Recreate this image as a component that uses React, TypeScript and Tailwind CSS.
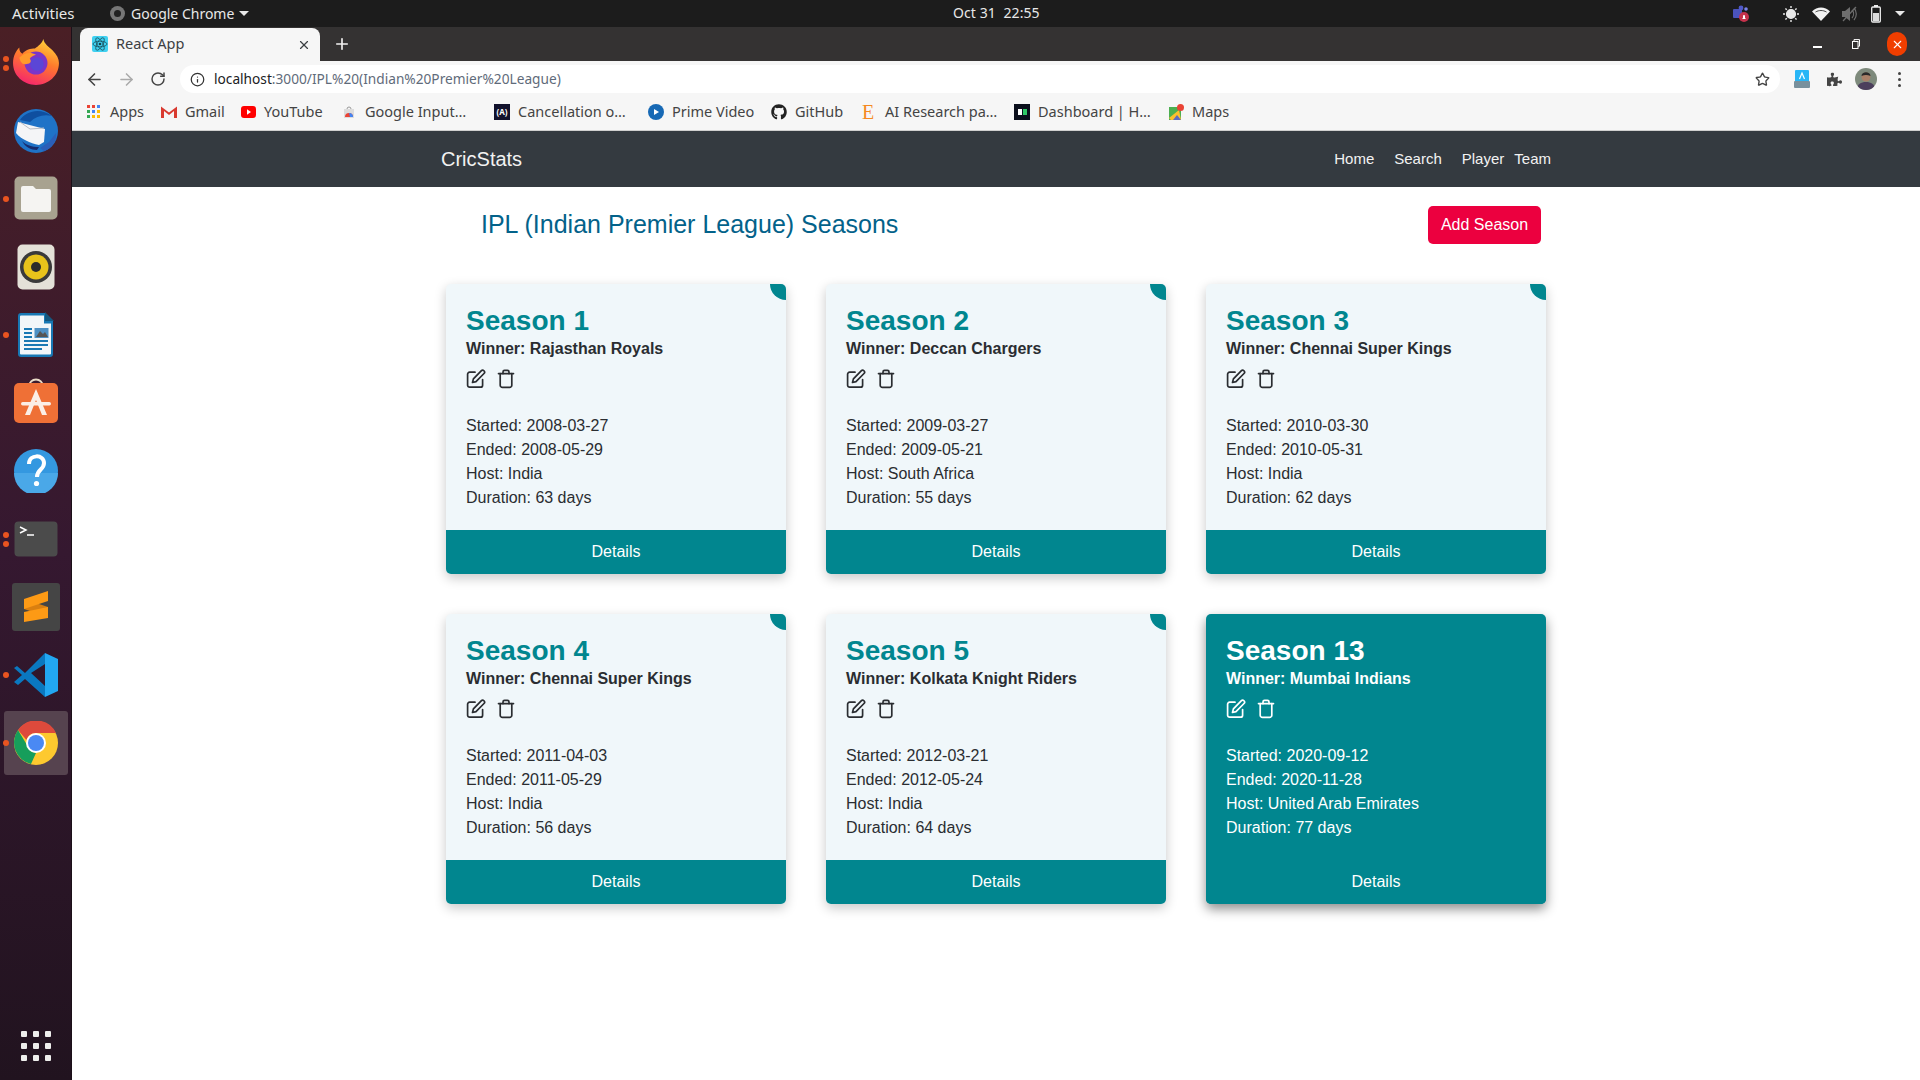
import { ArrowLeft, ArrowRight, Info, Plus, RotateCw, Star, X } from 'lucide-react';
import { FaGithub, FaPuzzlePiece } from 'react-icons/fa';

const seasons = [
  { name: 'Season 1', winner: 'Rajasthan Royals', start: '2008-03-27', end: '2008-05-29', host: 'India', days: 63 },
  { name: 'Season 2', winner: 'Deccan Chargers', start: '2009-03-27', end: '2009-05-21', host: 'South Africa', days: 55 },
  { name: 'Season 3', winner: 'Chennai Super Kings', start: '2010-03-30', end: '2010-05-31', host: 'India', days: 62 },
  { name: 'Season 4', winner: 'Chennai Super Kings', start: '2011-04-03', end: '2011-05-29', host: 'India', days: 56 },
  { name: 'Season 5', winner: 'Kolkata Knight Riders', start: '2012-03-21', end: '2012-05-24', host: 'India', days: 64 },
  { name: 'Season 13', winner: 'Mumbai Indians', start: '2020-09-12', end: '2020-11-28', host: 'United Arab Emirates', days: 77, active: true },
];

const EditIcon = () => (
  <svg width="20" height="20" viewBox="0 0 20 20" fill="none" stroke="currentColor" strokeWidth="1.7" strokeLinecap="round" strokeLinejoin="round">
    <path d="M9 3.2H3.6A2 2 0 0 0 1.6 5.2v11a2 2 0 0 0 2 2h11a2 2 0 0 0 2-2v-5.6" />
    <path d="M15.2 1.8a1.9 1.9 0 0 1 2.8 2.7L10 12.6l-3.5.9.9-3.6z" />
  </svg>
);

const TrashIcon = () => (
  <svg width="18" height="20" viewBox="0 0 18 20" fill="none" stroke="currentColor" strokeWidth="1.7" strokeLinecap="round" strokeLinejoin="round">
    <path d="M1.5 4.6h15" />
    <path d="M6 4.6V2.9a1.5 1.5 0 0 1 1.5-1.5h3A1.5 1.5 0 0 1 12 2.9v1.7" />
    <path d="M3.2 4.6v11.6a2.2 2.2 0 0 0 2.2 2.2h7.2a2.2 2.2 0 0 0 2.2-2.2V4.6" />
  </svg>
);

const SeasonCard = ({ season }: { season: (typeof seasons)[number] }) => {
  const active = !!season.active;
  return (
    <div className={`relative overflow-hidden rounded-[5px] h-[290px] flex flex-col ${active ? 'bg-[#01868f] text-white shadow-[0_5px_12px_rgba(0,0,0,0.45)]' : 'bg-[#f0f7fa] text-[#2a2d31] shadow-[0_4px_12px_rgba(0,0,0,0.22)]'}`}>
      {!active && <div className="absolute -top-4 -right-4 w-8 h-8 rounded-full bg-[#01868f]" />}
      <div className="flex-1 px-5 pt-[20px]">
        <h3 className={`text-[28px] leading-[33px] font-bold ${active ? 'text-white' : 'text-[#01868f]'}`}>{season.name}</h3>
        <div className="text-base leading-6 font-bold">Winner: {season.winner}</div>
        <div className="flex items-center gap-[11px] mt-[8px] h-5">
          <EditIcon />
          <TrashIcon />
        </div>
        <div className="mt-[25px] text-base leading-6">
          <div>Started: {season.start}</div>
          <div>Ended: {season.end}</div>
          <div>Host: {season.host}</div>
          <div>Duration: {season.days} days</div>
        </div>
      </div>
      <div className="h-11 flex items-center justify-center bg-[#01868f] text-white text-base">Details</div>
    </div>
  );
};

const Firefox = () => (
  <svg width="48" height="48" viewBox="0 0 46 46" className="mb-[2px]">
    <defs>
      <linearGradient id="ff1" x1="0.7" y1="0" x2="0.3" y2="1">
        <stop offset="0" stopColor="#ffd43a" />
        <stop offset="0.45" stopColor="#ff7a2c" />
        <stop offset="1" stopColor="#f5246e" />
      </linearGradient>
    </defs>
    <path d="M30 1c1 5 5 7 9 11 4 4 6 8 6 12 0 12-10 21-22 21S1 36 1 24C1 17 4 12 7 9c0 3 1 5 3 6 3-4 8-5 12-5 3-2 7-5 8-9z" fill="url(#ff1)" />
    <circle cx="23" cy="24" r="11" fill="#7a35c9" />
    <circle cx="24" cy="25" r="6.5" fill="#5b46d6" />
    <path d="M7 19c4-5 11-6 16-3-3 1-5 2-6 4 2 2 1 5-3 5-4 1-6-2-7-6z" fill="#ff9a2c" />
  </svg>
);

const Thunderbird = () => (
  <svg width="48" height="48" viewBox="0 0 48 48" className="mb-[2px]">
    <circle cx="24" cy="25" r="22" fill="#1f73c7" />
    <path d="M8 14c6-9 20-13 32-4-8-2-16 0-22 6z" fill="#0f4fa0" />
    <path d="M6 16l27 7-1 13-5 3C18 37 9 33 4 27z" fill="#f4f5f7" />
    <path d="M8 16l10 7 14-1" fill="none" stroke="#b9bdc4" strokeWidth="1" />
    <path d="M28 42l9-6 7-9c1 8-4 16-12 18z" fill="#2b5fb8" />
    <path d="M10 35c4 4 10 6 17 6l-2 3c-6 0-12-3-15-9z" fill="#172c6e" />
  </svg>
);

const Files = () => (
  <svg width="44" height="44" viewBox="0 0 44 44" className="mb-[2px]">
    <rect x="0.5" y="0.5" width="43" height="43" rx="5" fill="#a8a290" />
    <path d="M7 12a2 2 0 0 1 2-2h10l3 3h13a2 2 0 0 1 2 2v19a2 2 0 0 1-2 2H9a2 2 0 0 1-2-2z" fill="#f5f4f2" />
  </svg>
);

const Rhythmbox = () => (
  <svg width="38" height="46" viewBox="0 0 38 46">
    <rect x="0.5" y="0.5" width="37" height="45" rx="5" fill="#e4e1d8" />
    <circle cx="19" cy="23" r="16" fill="#3a3a3a" />
    <circle cx="19" cy="23" r="12.5" fill="#e8c31b" />
    <circle cx="19" cy="23" r="5" fill="#2b2b2b" />
  </svg>
);

const Writer = () => (
  <svg width="36" height="46" viewBox="0 0 36 46">
    <path d="M3 1h24l8 8v33a3 3 0 0 1-3 3H3a3 3 0 0 1-3-3V4a3 3 0 0 1 3-3z" fill="#1878b4" />
    <path d="M3 3.5h23v8h7v30a1 1 0 0 1-1 1H3a1 1 0 0 1-1-1V4.5a1 1 0 0 1 1-1z" fill="#f2f6f9" />
    <path d="M27 0l9 9h-9z" fill="#15577f" />
    <rect x="6" y="16" width="8" height="2" fill="#1878b4" />
    <rect x="6" y="20" width="8" height="2" fill="#1878b4" />
    <rect x="6" y="24" width="8" height="2" fill="#1878b4" />
    <rect x="6" y="28" width="24" height="2" fill="#1878b4" />
    <rect x="6" y="32" width="24" height="2" fill="#1878b4" />
    <rect x="6" y="36" width="18" height="2" fill="#1878b4" />
    <rect x="16.5" y="16" width="14" height="10" fill="#4d90c4" />
    <path d="M18 25l4-6 3 3 2-2 3 5z" fill="#555" />
  </svg>
);

const Software = () => (
  <svg width="44" height="46" viewBox="0 0 44 46" className="mb-[6px]">
    <path d="M15 10c0-10 14-10 14 0" fill="none" stroke="#e9dcc8" strokeWidth="2" />
    <rect x="0" y="6" width="44" height="40" rx="5" fill="#ef7036" />
    <path d="M22 12l11 26h-5l-6-15-6 15h-5z" fill="#fbeee6" />
    <rect x="7" y="25" width="30" height="3.5" rx="1.7" fill="#fbeee6" />
  </svg>
);

const Help = () => (
  <svg width="44" height="44" viewBox="0 0 44 44">
    <circle cx="22" cy="22" r="22" fill="#3498e0" />
    <path d="M0 24h44a22 22 0 0 1-44 0z" fill="#4aa8e8" />
    <path d="M15 15c0-10 15-10 15-1 0 7-7 6-7 14" fill="none" stroke="#fff" strokeWidth="4" />
    <circle cx="22.5" cy="34.5" r="2.6" fill="#fff" />
  </svg>
);

const Terminal = () => (
  <svg width="44" height="36" viewBox="0 0 44 36">
    <rect x="0.5" y="0.5" width="43" height="35" rx="4" fill="#4b4b4b" />
    <path d="M6 6l6 3-6 3" fill="none" stroke="#fff" strokeWidth="1.5" />
    <path d="M13 14h7" stroke="#fff" strokeWidth="1.5" />
  </svg>
);

const Sublime = () => (
  <svg width="48" height="48" viewBox="0 0 48 48">
    <rect width="48" height="48" rx="3" fill="#454545" />
    <path d="M12 16l24 8v10L12 26z" fill="#d97f10" />
    <path d="M36 8v10l-24 8V16z" fill="#fd9a15" />
    <path d="M36 24v11l-24 4V29z" fill="#fd9a15" />
  </svg>
);

const VsCode = () => (
  <svg width="44" height="44" viewBox="0 0 44 44">
    <path d="M31 0l13 6v32l-13 6z" fill="#22a7f2" />
    <path d="M31 0L11 20 3 13 0 15v0l8 7-8 7 4 3 7-6 20 18 0-11-14-13L31 11z" fill="#0a78c0" />
  </svg>
);

const Chrome = () => (
  <svg width="44" height="44" viewBox="0 0 44 44">
    <circle cx="22" cy="22" r="22" fill="#fdc92f" />
    <path d="M4 9A22 22 0 0 1 42 12H22a10 10 0 0 0-9.5 7z" fill="#dd4a3c" />
    <path d="M4 9l9 15a10 10 0 0 0 9 8l-5 11A22 22 0 0 1 4 9z" fill="#169e5b" />
    <circle cx="22" cy="22" r="10" fill="#fff" />
    <circle cx="22" cy="22" r="8" fill="#4a89f3" />
  </svg>
);

const dock = [
  { icon: <Firefox />, dots: 2 },
  { icon: <Thunderbird />, dots: 0 },
  { icon: <Files />, dots: 1 },
  { icon: <Rhythmbox />, dots: 0 },
  { icon: <Writer />, dots: 1 },
  { icon: <Software />, dots: 0 },
  { icon: <Help />, dots: 0 },
  { icon: <Terminal />, dots: 2 },
  { icon: <Sublime />, dots: 0 },
  { icon: <VsCode />, dots: 1 },
  { icon: <Chrome />, dots: 1, active: true },
];

const Dock = () => (
  <aside className="w-[72px] shrink-0 flex flex-col items-center bg-gradient-to-b from-[#4a1f25] via-[#351830] to-[#21131f] pt-[2px] pb-[19px] border-r border-[#1b1018]">
    {dock.map((item, i) => (
      <div key={i} className="relative w-[64px] h-[68px] flex items-center justify-center">
        {item.active && <div className="absolute left-0 top-[2px] w-[64px] h-[64px] rounded-[3px] bg-[#56434f]" />}
        <div className="relative">{item.icon}</div>
        {item.dots > 0 && (
          <div className="absolute left-0 top-0 bottom-0 -translate-x-[1px] flex flex-col justify-center gap-[3px]">
            {item.dots === 2 && <span className="w-[6px] h-[6px] rounded-full bg-[#e95420]" />}
            <span className="w-[6px] h-[6px] rounded-full bg-[#e95420]" />
          </div>
        )}
      </div>
    ))}
    <div className="mt-auto grid grid-cols-3 gap-[6px]">
      {[0, 1, 2, 3, 4, 5, 6, 7, 8].map((n) => (
        <span key={n} className="w-[6px] h-[6px] rounded-[1px] bg-[#eeeeec]" />
      ))}
    </div>
  </aside>
);

const TopBar = () => (
  <div className="h-[27px] shrink-0 bg-[#1c1c1c] text-[#e8e8e8] text-[14px] font-['Noto_Sans',sans-serif] flex items-center relative">
    <span className="ml-[12px] w-[98px] text-[15px]">Activities</span>
    <span className="w-[15px] h-[15px] rounded-full bg-[#777] mr-[6px] flex items-center justify-center">
      <span className="w-[7px] h-[7px] rounded-full bg-[#222]" />
    </span>
    <span>Google Chrome</span>
    <span className="ml-[5px] w-0 h-0 border-x-[5px] border-x-transparent border-t-[5px] border-t-[#e8e8e8]" />
    <span className="absolute left-[953px] top-[4px] leading-[18px] tracking-[0.1px]">Oct 31&nbsp; 22:55</span>
    <div className="ml-auto flex items-center mr-[15px]">
      <svg width="16" height="18" viewBox="0 0 16 18" className="mr-[33px]">
        <rect x="0" y="4" width="9" height="9" rx="1" fill="#4b53bc" />
        <circle cx="8" cy="3" r="2.4" fill="#5059c9" />
        <circle cx="13" cy="4" r="1.8" fill="#7b83eb" />
        <circle cx="11" cy="12" r="5" fill="#c4314b" />
        <path d="M9 14h4l-1-1v-2a1 1 0 0 0-2 0v2z" fill="#fff" />
      </svg>
      <svg width="18" height="18" viewBox="0 0 18 18" className="mr-[12px]" stroke="#e8e8e8" fill="none" strokeWidth="1.4">
        <circle cx="9" cy="9" r="4.4" fill="#e8e8e8" />
        <path d="M9 1v2M9 15v2M1 9h2M15 9h2M3.4 3.4l1.4 1.4M13.2 13.2l1.4 1.4M14.6 3.4l-1.4 1.4M4.8 13.2l-1.4 1.4" />
      </svg>
      <svg width="18" height="14" viewBox="0 0 18 14" className="mr-[12px]">
        <path d="M0 4.5C5-1 13-1 18 4.5L9 14z" fill="#f2f2f2" />
        <path d="M3.5 5C7 3 11 3 14.5 5" stroke="#1c1c1c" strokeWidth="0.8" fill="none" />
      </svg>
      <svg width="16" height="16" viewBox="0 0 16 16" className="mr-[13px]">
        <path d="M0 5h3l5-4v14l-5-4H0z" fill="#6e6e6e" />
        <path d="M10 4a6 6 0 0 1 0 8M12 2a9 9 0 0 1 0 12" stroke="#6e6e6e" fill="none" strokeWidth="1.2" />
        <path d="M1 15L14 1" stroke="#6e6e6e" strokeWidth="1.2" />
      </svg>
      <svg width="10" height="18" viewBox="0 0 10 18" className="mr-[14px]">
        <rect x="0.7" y="2" width="8.6" height="15" rx="1" fill="none" stroke="#eee" strokeWidth="1.3" />
        <rect x="3" y="0" width="4" height="2" fill="#eee" />
        <rect x="2" y="8" width="6" height="8" fill="#ddd" />
      </svg>
      <span className="w-0 h-0 border-x-[5px] border-x-transparent border-t-[5px] border-t-[#e8e8e8]" />
    </div>
  </div>
);

const TabStrip = () => (
  <div className="h-[34px] shrink-0 bg-[#343232] flex items-end pl-[8px] font-['Noto_Sans',sans-serif]">
    <div className="w-[240px] h-[33px] bg-[#f6f6f6] rounded-t-[8px] flex items-center pl-[12px] pr-[9px] text-[14.5px] text-[#3c4043]">
      <svg width="16" height="16" viewBox="0 0 16 16" className="mr-[8px] mb-[2px]">
        <rect width="16" height="16" rx="2" fill="#3fd0f0" />
        <g fill="none" stroke="#17424d" strokeWidth="0.7">
          <ellipse cx="8" cy="8" rx="7" ry="2.8" />
          <ellipse cx="8" cy="8" rx="7" ry="2.8" transform="rotate(60 8 8)" />
          <ellipse cx="8" cy="8" rx="7" ry="2.8" transform="rotate(120 8 8)" />
        </g>
        <circle cx="8" cy="8" r="1.3" fill="#17424d" />
      </svg>
      <span className="mb-[2px]">React App</span>
      <X className="ml-auto" size={14} strokeWidth={2} color="#3c4043" />
    </div>
    <Plus className="ml-[13px] mb-[8px]" size={18} strokeWidth={2.2} color="#f1f1f1" />
    <div className="ml-auto h-full flex items-center">
      <span className="w-[9px] h-[1.5px] bg-white mr-[30px] mt-[6px]" />
      <svg width="8" height="10" viewBox="0 0 8 10" className="mr-[27px]" fill="none" stroke="#fff" strokeWidth="1">
        <rect x="0.5" y="2.5" width="5.5" height="7" />
        <path d="M2 2.5V0.6h5.5v6.6H6" />
      </svg>
      <span className="w-5 h-6 rounded-full bg-[#f03e00] flex items-center justify-center mr-[13px]">
        <X size={13} strokeWidth={2} color="#fff" />
      </span>
    </div>
  </div>
);

const Toolbar = () => (
  <div className="h-[34px] shrink-0 bg-[#f6f6f6] flex items-center font-['Noto_Sans',sans-serif] pt-[2px]">
    <div className="w-[108px] flex items-center pl-[13px] gap-[13px]">
      <ArrowLeft size={19} strokeWidth={2} color="#444" />
      <ArrowRight size={19} strokeWidth={2} color="#aaa" />
      <RotateCw size={16} strokeWidth={2.2} color="#444" className="ml-[1px]" />
    </div>
    <div className="w-[1600px] h-[28px] bg-white rounded-full flex items-center pl-[10px] pr-[10px]">
      <Info size={15} strokeWidth={2} color="#333" className="mr-[9px]" />
      <span className="text-[13.7px] text-[#202124]">localhost<span className="text-[#5f6b7a]">:3000/IPL%20(Indian%20Premier%20League)</span></span>
      <Star className="ml-auto" size={15} strokeWidth={2.2} color="#444" />
    </div>
    <svg width="16" height="18" viewBox="0 0 16 18" className="ml-[14px]">
      <rect x="1" y="0" width="14" height="12" rx="1" fill="#29b6f6" />
      <rect x="0" y="11" width="16" height="7" rx="1" fill="#78909c" />
      <path d="M5.5 9L8 3l2.5 6" fill="none" stroke="#fff" strokeWidth="1.2" />
    </svg>
    <FaPuzzlePiece size={15} color="#444" className="ml-[17px]" />
    <svg width="22" height="22" viewBox="0 0 22 22" className="ml-[13px]">
      <defs>
        <clipPath id="avatar"><circle cx="11" cy="11" r="11" /></clipPath>
      </defs>
      <g clipPath="url(#avatar)">
        <rect width="22" height="22" fill="#7e8a7c" />
        <path d="M2 22c0-6 4-8 9-8s9 2 9 8z" fill="#4c3f5c" />
        <circle cx="11" cy="9" r="4.5" fill="#a98068" />
        <path d="M6.5 8c0-5 9-5 9 0-3-1.500-6-1.500-9 0z" fill="#2a2a2a" />
      </g>
    </svg>
    <div className="ml-[21px] flex flex-col gap-[3px]">
      <span className="w-[3px] h-[3px] rounded-full bg-[#444]" />
      <span className="w-[3px] h-[3px] rounded-full bg-[#444]" />
      <span className="w-[3px] h-[3px] rounded-full bg-[#444]" />
    </div>
  </div>
);

const bookmarks = [
  {
    label: 'Apps', width: 'w-[75px]',
    icon: (
      <svg width="14" height="14" viewBox="0 0 14 14">
        <rect x="0" y="0" width="3" height="3" fill="#ea4335" /><rect x="5" y="0" width="3" height="3" fill="#ea4335" /><rect x="10" y="0" width="3" height="3" fill="#4285f4" />
        <rect x="0" y="5" width="3" height="3" fill="#34a853" /><rect x="5" y="5" width="3" height="3" fill="#4285f4" /><rect x="10" y="5" width="3" height="3" fill="#fbbc05" />
        <rect x="0" y="10" width="3" height="3" fill="#34a853" /><rect x="5" y="10" width="3" height="3" fill="#fbbc05" /><rect x="10" y="10" width="3" height="3" fill="#fbbc05" />
      </svg>
    ),
  },
  {
    label: 'Gmail', width: 'w-[79px]',
    icon: (
      <svg width="16" height="13" viewBox="0 0 16 13">
        <path d="M0 1.5L8 7.5l8-6V13h-3V6L8 10 3 6v7H0z" fill="#d93a30" />
      </svg>
    ),
  },
  {
    label: 'YouTube', width: 'w-[101px]',
    icon: (
      <svg width="15" height="12" viewBox="0 0 15 12">
        <rect width="15" height="12" rx="3" fill="#f00" />
        <path d="M6 3.2L10 6 6 8.8z" fill="#fff" />
      </svg>
    ),
  },
  {
    label: 'Google Input…', width: 'w-[153px]',
    icon: (
      <svg width="14" height="15" viewBox="0 0 14 15">
        <path d="M2 5h10v9H2z" fill="#dcdcdc" />
        <path d="M5 5a2 2 0 0 1 4 0" fill="none" stroke="#999" />
        <path d="M3 13a4 4 0 0 1 8 0z" fill="#ea4335" />
        <path d="M7 9a4 4 0 0 1 4 4H8z" fill="#4285f4" />
      </svg>
    ),
  },
  {
    label: 'Cancellation o…', width: 'w-[154px]',
    icon: (
      <span className="w-4 h-4 bg-[#12122c] text-white text-[8px] leading-4 text-center font-bold block">(A)</span>
    ),
  },
  {
    label: 'Prime Video', width: 'w-[123px]',
    icon: (
      <svg width="16" height="16" viewBox="0 0 16 16">
        <circle cx="8" cy="8" r="8" fill="#1769b5" />
        <path d="M6 5l5 3-5 3z" fill="#fff" />
      </svg>
    ),
  },
  { label: 'GitHub', width: 'w-[90px]', icon: <FaGithub size={16} color="#222" /> },
  {
    label: 'AI Research pa…', width: 'w-[153px]',
    icon: <span className="w-[14px] text-[#f58a1f] text-[20px] leading-4 font-['Liberation_Serif',serif] block">E</span>,
  },
  {
    label: 'Dashboard | H…', width: 'w-[155px]',
    icon: (
      <span className="w-4 h-4 bg-[#0b0f1c] flex items-center justify-center gap-[1px]">
        <span className="w-[4px] h-[6px] bg-white" />
        <span className="w-[4px] h-[6px] bg-[#2ec866]" />
      </span>
    ),
  },
  {
    label: 'Maps', width: 'w-[60px]',
    icon: (
      <svg width="15" height="16" viewBox="0 0 15 16">
        <path d="M0 3h12v13H0z" fill="#4caf50" />
        <path d="M0 14L10 6l2 10H2z" fill="#fbc02d" />
        <path d="M4 16l4-5 4 5z" fill="#5c6bc0" />
        <circle cx="11.5" cy="3.5" r="3.5" fill="#ea4335" />
      </svg>
    ),
  },
];

const BookmarksBar = () => (
  <div className="h-[36px] shrink-0 bg-[#f6f6f6] border-b border-[#cfcfcf] flex items-center pl-[14px] pb-[2px] font-['Noto_Sans',sans-serif] text-[14.5px] text-[#444]">
    {bookmarks.map((b) => (
      <div key={b.label} className={`${b.width} shrink-0 flex items-center gap-[8px]`}>
        <span className="w-4 flex justify-center">{b.icon}</span>
        <span className="whitespace-nowrap">{b.label}</span>
      </div>
    ))}
  </div>
);

export default function App() {
  return (
    <div className="h-screen w-screen overflow-hidden flex flex-col bg-white font-['Liberation_Sans',sans-serif]">
      <TopBar />
      <div className="flex-1 flex min-h-0">
        <Dock />
        <div className="flex-1 flex flex-col min-w-0">
          <TabStrip />
          <Toolbar />
          <BookmarksBar />
          <nav className="h-[56px] shrink-0 bg-[#343a40]">
            <div className="w-[1140px] mx-auto h-full px-[15px] flex items-center text-[15px] text-[#f2f2f2]">
              <span className="text-[20px]">CricStats</span>
              <div className="ml-auto flex items-center">
                <span className="mr-[20px]">Home</span>
                <span className="mr-[20px]">Search</span>
                <span className="mr-[10px]">Player</span>
                <span>Team</span>
              </div>
            </div>
          </nav>
          <main className="flex-1 w-[1140px] mx-auto">
            <div className="flex items-center justify-between h-[38px] mt-[19px] pl-[55px] pr-[25px]">
              <h2 className="text-[25px] text-[#03628a]">IPL (Indian Premier League) Seasons</h2>
              <button className="h-[38px] w-[113px] rounded-[5px] bg-[#ec003f] text-white text-base">Add Season</button>
            </div>
            <div className="grid grid-cols-[340px_340px_340px] gap-x-[40px] gap-y-[40px] pl-[20px] mt-[40px]">
              {seasons.map((s) => (
                <SeasonCard key={s.name} season={s} />
              ))}
            </div>
          </main>
        </div>
      </div>
    </div>
  );
}
